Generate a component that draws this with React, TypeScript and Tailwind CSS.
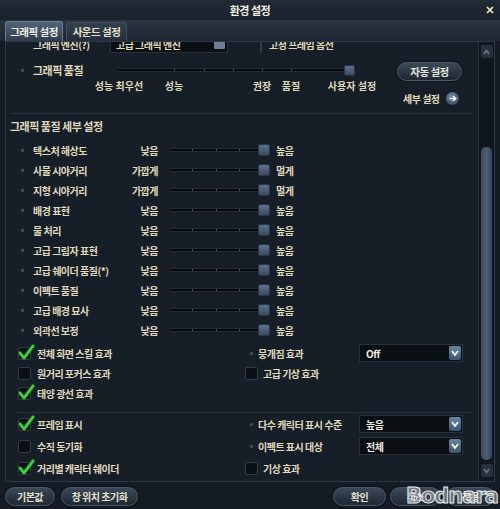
import { type ReactElement, type ReactNode } from 'react';

const cream = 'text-[#e0dabd]';

function Bullet({ className = '' }: { className?: string }): ReactElement {
    return <span className={`w-[3px] h-[3px] shrink-0 bg-[#3a4858] ${className}`} />;
}

function Check({ on }: { on?: boolean }): ReactElement {
    return (
        <span className="relative w-[13px] h-[13px] shrink-0 rounded-[2px] bg-[#0b1016] border border-[#333d49]">
            {on && (
                <svg className="absolute -top-[4px] -left-[1px]" width="17" height="17" viewBox="0 0 17 17">
                    <path d="M2 9 L6 14 L15 2" fill="none" stroke="#1d6a22" strokeWidth="4" strokeLinecap="round" strokeLinejoin="round" />
                    <path d="M2 9 L6 14 L15 2" fill="none" stroke="#45d245" strokeWidth="2.2" strokeLinecap="round" strokeLinejoin="round" />
                </svg>
            )}
        </span>
    );
}

function Chevron(): ReactElement {
    return (
        <span className="w-[12px] h-[14px] rounded-[2px] bg-gradient-to-b from-[#6a84a0] to-[#3e5670] flex items-center justify-center">
            <svg width="8" height="7" viewBox="0 0 8 7">
                <path d="M1 1 L4 5 L7 1" fill="none" stroke="#f2f2f2" strokeWidth="1.8" />
            </svg>
        </span>
    );
}

function Dropdown({ value }: { value: string }): ReactElement {
    return (
        <div className="flex items-center w-[104px] h-[18px] bg-[#0a0f14] border border-[#28313c] pl-[6px] pr-[1px]">
            <span className="text-[10px] text-[#ecebe4]">{value}</span>
            <span className="ml-auto">
                <Chevron />
            </span>
        </div>
    );
}

function Track({ children, className = '' }: { children: ReactNode; className?: string }): ReactElement {
    return (
        <div className={`flex h-[4px] bg-[#05080b] border-y border-[#242c36] ${className}`}>{children}</div>
    );
}

function Thumb({ size }: { size: string }): ReactElement {
    return (
        <span
            className={`${size} shrink-0 rounded-[2px] bg-gradient-to-b from-[#5d7290] to-[#3b4b60] border border-[#2a3646]`}
        />
    );
}

function DetailRow({ label, low, high }: { label: string; low: string; high: string }): ReactElement {
    return (
        <div className="flex items-center h-[20px] pl-[15px]">
            <Bullet />
            <span className="ml-[9px] w-[90px]">{label}</span>
            <span className="w-[35px] text-right">{low}</span>
            <Track className="ml-[12px] w-[88px]">
                <span className="w-[23px] border-r border-[#46505c]" />
                <span className="w-[24px] border-r border-[#46505c]" />
                <span className="w-[23px] border-r border-[#46505c]" />
                <span className="flex-1" />
            </Track>
            <Thumb size="w-[12px] h-[12px]" />
            <span className="ml-[6px]">{high}</span>
        </div>
    );
}

function Pill({ children, w }: { children: ReactNode; w: string }): ReactElement {
    return (
        <div
            className={`${w} h-[19px] rounded-[10px] flex items-center justify-center bg-gradient-to-b from-[#3c4959] to-[#1f2833] border border-[#4a5869] shadow-[0_0_2px_#000]`}
        >
            {children}
        </div>
    );
}

const details = [
    ['텍스처 해상도', '낮음', '높음'],
    ['사물 시야거리', '가깝게', '멀게'],
    ['지형 시야거리', '가깝게', '멀게'],
    ['배경 표현', '낮음', '높음'],
    ['물 처리', '낮음', '높음'],
    ['고급 그림자 표현', '낮음', '높음'],
    ['고급 쉐이더 품질(*)', '낮음', '높음'],
    ['이펙트 품질', '낮음', '높음'],
    ['고급 배경 묘사', '낮음', '높음'],
    ['외곽선 보정', '낮음', '높음'],
];

export default function App(): ReactElement {
    return (
        <div
            className={`relative w-[500px] h-[509px] overflow-hidden bg-[#151c25] font-['Noto_Sans_CJK_KR','Noto_Sans',sans-serif] font-bold text-[10px] tracking-[-0.5px] ${cream}`}
        >
            {/* title bar */}
            <div className="relative h-[20px] flex items-center justify-center bg-gradient-to-b from-[#222b36] to-[#1a222c]">
                <span className="text-[11px] text-[#f0efe6]">환경 설정</span>
                <svg className="absolute right-[6px] top-[6px]" width="8" height="8" viewBox="0 0 8 8">
                    <path d="M1 1 L7 7 M7 1 L1 7" stroke="#f4f0b8" strokeWidth="1.6" />
                </svg>
            </div>

            {/* tabs */}
            <div className="h-[21px] flex items-end pl-[5px] gap-[3px] bg-gradient-to-b from-[#2b3543] to-[#1d2631]">
                <div className="w-[58px] h-[20px] rounded-t-[3px] flex items-center justify-center bg-gradient-to-b from-[#53657a] to-[#2e3c4d] border border-b-0 border-[#6c7d90] text-[10.5px] text-[#f2f0e4]">
                    그래픽 설정
                </div>
                <div className="w-[61px] h-[19px] rounded-t-[3px] flex items-center justify-center bg-gradient-to-b from-[#34404f] to-[#242e3a] border border-b-0 border-[#435063] text-[10.5px] text-[#e6e2d0]">
                    사운드 설정
                </div>
            </div>

            {/* main panel */}
            <div className="mx-[5px] h-[441px] flex border border-[#2f3946] bg-[#161e28]">
                <div className="w-[472px] flex flex-col overflow-hidden">
                    <div className="ml-[4px] mr-[6px] border-b border-[#29323e]">
                        {/* engine row, scrolled mostly out of view */}
                        <div className="-mt-[8px] mb-[3px] h-[20px] flex items-center pl-[23px]">
                            <span className="w-[77px]">그래픽 엔진(?)</span>
                            <div className="flex items-center w-[118px] h-[17px] bg-[#0a0f14] border border-[#28313c] pl-[5px] pr-[2px]">
                                <span>고급 그래픽 엔진</span>
                                <span className="ml-auto w-[11px] h-[9px] rounded-[1px] bg-[#6a7e96]" />
                            </div>
                            <span className="ml-[32px]">
                                <Check />
                            </span>
                            <span className="ml-[7px]">고정 프레임 옵션</span>
                        </div>

                        {/* graphics quality */}
                        <div className="h-[56px] flex">
                            <div className="w-[387px] flex flex-col">
                                <div className="mt-[5px] h-[16px] flex items-center pl-[11px]">
                                    <Bullet />
                                    <span className="ml-[9px] w-[85px] text-[11px]">그래픽 품질</span>
                                    <Track className="w-[226px]">
                                        <span className="w-[57px] border-r border-[#46505c]" />
                                        <span className="w-[30px] border-r border-[#46505c]" />
                                        <span className="w-[29px] border-r border-[#46505c]" />
                                        <span className="w-[29px] border-r border-[#46505c]" />
                                        <span className="w-[29px] border-r border-[#46505c]" />
                                        <span className="flex-1" />
                                    </Track>
                                    <Thumb size="w-[11px] h-[11px]" />
                                </div>
                                <div className="h-[14px] flex items-center pl-[79px] whitespace-nowrap tracking-normal">
                                    <span className="w-[60px] flex justify-center">성능 최우선</span>
                                    <span className="w-[50px] flex justify-center">성능</span>
                                    <span className="ml-[43px] w-[40px] flex justify-center">권장</span>
                                    <span className="w-[18px] flex justify-center">품질</span>
                                    <span className="ml-[22px] w-[60px] flex justify-center">사용자 설정</span>
                                </div>
                            </div>
                            <div className="flex flex-col">
                                <div className="mt-[5px]">
                                    <Pill w="w-[65px]">
                                        <span className="text-[10.5px] text-[#e8e6d8]">자동 설정</span>
                                    </Pill>
                                </div>
                                <div className="mt-[11px] h-[13px] flex items-center pl-[6px]">
                                    <span className="w-[43px]">세부 설정</span>
                                    <span className="w-[13px] h-[13px] rounded-full bg-[radial-gradient(circle_at_40%_35%,#6d8aa8,#2c3e52)] flex items-center justify-center">
                                        <svg width="8" height="7" viewBox="0 0 8 7">
                                            <path d="M0.5 3.5 H6.5 M4 1 L6.8 3.5 L4 6" fill="none" stroke="#ffffff" strokeWidth="1.4" />
                                        </svg>
                                    </span>
                                </div>
                            </div>
                        </div>
                    </div>

                    {/* detail header */}
                    <div className="h-[24px] flex items-center pl-[4px] text-[11px]">그래픽 품질 세부 설정</div>

                    <div className="mt-[2px] flex flex-col">
                        {details.map(([l, lo, hi]) => (
                            <DetailRow key={l} label={l} low={lo} high={hi} />
                        ))}
                    </div>

                    {/* effect toggles */}
                    <div className="mt-[3px] flex">
                        <div className="w-[239px] flex flex-col pl-[12px]">
                            <div className="h-[20px] flex items-center gap-[6px]">
                                <Check on />
                                <span>전체 화면 스킬 효과</span>
                            </div>
                            <div className="h-[20px] flex items-center gap-[6px]">
                                <Check />
                                <span>원거리 포커스 효과</span>
                            </div>
                            <div className="h-[20px] flex items-center gap-[6px]">
                                <Check on />
                                <span>태양 광선 효과</span>
                            </div>
                        </div>
                        <div className="flex flex-col">
                            <div className="h-[20px] flex items-center pl-[5px]">
                                <Bullet />
                                <span className="ml-[5px] w-[101px]">뭉개짐 효과</span>
                                <Dropdown value="Off" />
                            </div>
                            <div className="h-[20px] flex items-center gap-[5px]">
                                <Check />
                                <span>고급 기상 효과</span>
                            </div>
                        </div>
                    </div>

                    <div className="mt-[9px] ml-[9px] mr-[6px] border-t border-[#29323e]" />

                    {/* display options */}
                    <div className="flex">
                        <div className="w-[239px] flex flex-col pl-[12px]">
                            <div className="h-[22px] flex items-center gap-[6px]">
                                <Check on />
                                <span>프레임 표시</span>
                            </div>
                            <div className="h-[22px] flex items-center gap-[6px]">
                                <Check />
                                <span>수직 동기화</span>
                            </div>
                            <div className="h-[22px] flex items-center gap-[6px]">
                                <Check on />
                                <span>거리별 캐릭터 쉐이더</span>
                            </div>
                        </div>
                        <div className="flex flex-col">
                            <div className="h-[22px] flex items-center pl-[5px]">
                                <Bullet />
                                <span className="ml-[5px] w-[101px]">다수 캐릭터 표시 수준</span>
                                <Dropdown value="높음" />
                            </div>
                            <div className="h-[22px] flex items-center pl-[5px]">
                                <Bullet />
                                <span className="ml-[5px] w-[101px]">이펙트 표시 대상</span>
                                <Dropdown value="전체" />
                            </div>
                            <div className="h-[22px] flex items-center gap-[5px]">
                                <Check />
                                <span>기상 효과</span>
                            </div>
                        </div>
                    </div>
                </div>

                {/* scrollbar */}
                <div className="flex-1 flex flex-col items-center border-l border-[#28313c] bg-[#10161d]">
                    <div className="mt-[3px] w-[12px] h-[13px] rounded-[2px] bg-[#27313d] flex items-center justify-center">
                        <svg width="7" height="6" viewBox="0 0 7 6">
                            <path d="M1 5 L3.5 1.5 L6 5" fill="none" stroke="#6c7c90" strokeWidth="1.5" />
                        </svg>
                    </div>
                    <div className="mt-[89px] w-[11px] h-[313px] rounded-[5px] bg-gradient-to-r from-[#3e4e62] via-[#4a5c72] to-[#36465a]" />
                    <div className="mt-[4px] w-[12px] h-[13px] rounded-[2px] bg-[#27313d] flex items-center justify-center">
                        <svg width="7" height="6" viewBox="0 0 7 6">
                            <path d="M1 1 L3.5 4.5 L6 1" fill="none" stroke="#6c7c90" strokeWidth="1.5" />
                        </svg>
                    </div>
                </div>
            </div>

            {/* bottom buttons */}
            <div className="mt-[5px] flex px-[5px] text-[#e6e2d0]">
                <Pill w="w-[50px]">기본값</Pill>
                <span className="ml-[6px]">
                    <Pill w="w-[77px]">창 위치 초기화</Pill>
                </span>
                <span className="ml-[195px]">
                    <Pill w="w-[53px]">확인</Pill>
                </span>
                <span className="ml-[4px]">
                    <Pill w="w-[51px]">취소</Pill>
                </span>
                <span className="ml-[5px]">
                    <Pill w="w-[49px]">적용</Pill>
                </span>
            </div>

            {/* watermark */}
            <span className="absolute right-[2px] bottom-[-3px] font-['DejaVu_Sans',sans-serif] text-[21px] font-bold tracking-[-1px] text-[#9aa2a6]/60 [-webkit-text-stroke:1px_#e8ecee]">
                Bodnara
            </span>
        </div>
    );
}
